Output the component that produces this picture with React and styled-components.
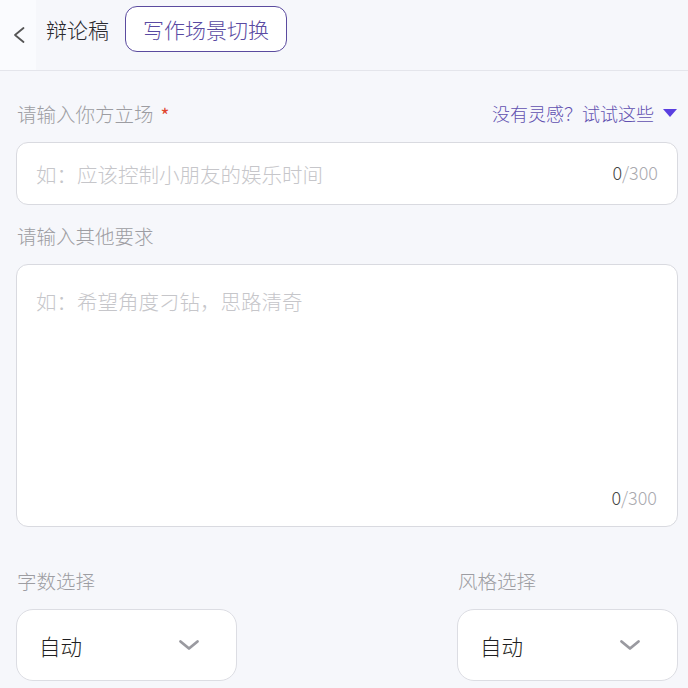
import React from "react";
import styled, { createGlobalStyle } from "styled-components";

const Global = createGlobalStyle`
  html, body { margin: 0; padding: 0; background: #f6f7fb; }
  body { font-family: "Noto Sans CJK SC", "Noto Sans", sans-serif; font-weight: 300; }
  * { box-sizing: border-box; }
`;

const Header = styled.header`
  height: 71px;
  display: flex;
  align-items: flex-start;
  border-bottom: 1px solid #e4e5eb;
`;

const BackButton = styled.div`
  width: 36px;
  height: 70px;
  background: #fafbfe;
  display: flex;
  justify-content: center;
  padding-top: 26px;
  padding-left: 2px;
`;

const HeaderRow = styled.div`
  display: flex;
  align-items: center;
  height: 46px;
  margin-top: 6px;
  margin-left: 10px;
  gap: 16px;
`;

const Title = styled.div`
  font-size: 21px;
  color: #2a2a2e;
  line-height: 1;
`;

const SwitchButton = styled.div`
  height: 46px;
  width: 162px;
  border: 1.5px solid #5b4b9f;
  border-radius: 12px;
  display: flex;
  align-items: center;
  justify-content: center;
  font-size: 21px;
  color: #5a4aa2;
  background: #fff;
`;

const Main = styled.main`
  padding: 28px 10px 0 16px;
`;

const LabelRow = styled.div`
  height: 28px;
  display: flex;
  align-items: center;
  justify-content: space-between;
  margin-top: ${(p) => p.$top || 0}px;
  margin-bottom: 15px;
`;

const Label = styled.div`
  font-size: 19.5px;
  color: #9d9da2;
  padding-left: 1px;
  display: flex;
  align-items: center;
`;

const Star = styled.span`
  color: #e0452f;
  font-size: 19px;
  font-weight: 400;
  margin-left: 7px;
  margin-top: 2px;
`;

const Inspire = styled.div`
  display: flex;
  align-items: center;
  gap: 8px;
  font-size: 18px;
  color: #6150b0;
`;

const Field = styled.div`
  background: #fff;
  border: 1px solid #d9dae0;
  border-radius: 12px;
  height: ${(p) => p.$h}px;
  position: relative;
  display: flex;
  align-items: ${(p) => (p.$multi ? "flex-start" : "center")};
  padding: ${(p) => (p.$multi ? "21px 19px" : "0 19px")};
`;

const Placeholder = styled.div`
  font-size: 20.5px;
  color: #c6c6ca;
  line-height: 30px;
  flex: 1;
`;

const Counter = styled.div`
  font-size: 18px;
  color: #aaaaaf;
  line-height: 1;
  ${(p) =>
    p.$multi
      ? `position: absolute; right: 20px; bottom: 20px;`
      : `margin-top: -4px;`}
`;

const Zero = styled.span`
  color: #444;
`;

const Grid = styled.div`
  display: grid;
  grid-template-columns: 221px 221px;
  justify-content: space-between;
  margin-top: 39px;
`;

const Column = styled.div`
  display: flex;
  flex-direction: column;
`;

const Select = styled.div`
  height: 72px;
  background: #fff;
  border: 1px solid #dcdde3;
  border-radius: 17px;
  display: flex;
  align-items: center;
  justify-content: space-between;
  padding: 0 36px 0 22px;
  font-size: 21.5px;
  color: #1f1f22;
`;

const Chevron = () => (
  <svg width="22" height="12" viewBox="0 0 22 12">
    <path d="M2.5 2.5 L11 9.5 L19.5 2.5" fill="none" stroke="#9a9aa0" strokeWidth="2.8" strokeLinecap="round" strokeLinejoin="round" />
  </svg>
);

const SelectBox = ({ label }) => (
  <Column>
    <LabelRow>
      <Label>{label}</Label>
    </LabelRow>
    <Select>
      <span>自动</span>
      <Chevron />
    </Select>
  </Column>
);

export default function App() {
  return (
    <>
      <Global />
      <Header>
        <BackButton>
          <svg width="16" height="18" viewBox="0 0 16 18">
            <path d="M12.5 2 L4 9 L12.5 16" fill="none" stroke="#555" strokeWidth="1.8" strokeLinecap="round" strokeLinejoin="round" />
          </svg>
        </BackButton>
        <HeaderRow>
          <Title>辩论稿</Title>
          <SwitchButton>写作场景切换</SwitchButton>
        </HeaderRow>
      </Header>
      <Main>
        <LabelRow>
          <Label>
            请输入你方立场<Star>*</Star>
          </Label>
          <Inspire>
            <span>没有灵感？试试这些</span>
            <svg width="16" height="10" viewBox="0 0 16 10">
              <path d="M1 1 L15 1 L8 9 Z" fill="#5a3fe0" />
            </svg>
          </Inspire>
        </LabelRow>
        <Field $h={63}>
          <Placeholder>如：应该控制小朋友的娱乐时间</Placeholder>
          <Counter>
            <Zero>0</Zero>/300
          </Counter>
        </Field>
        <LabelRow $top={16}>
          <Label>请输入其他要求</Label>
        </LabelRow>
        <Field $h={263} $multi>
          <Placeholder>如：希望角度刁钻，思路清奇</Placeholder>
          <Counter $multi>
            <Zero>0</Zero>/300
          </Counter>
        </Field>
        <Grid>
          <SelectBox label="字数选择" />
          <SelectBox label="风格选择" />
        </Grid>
      </Main>
    </>
  );
}
